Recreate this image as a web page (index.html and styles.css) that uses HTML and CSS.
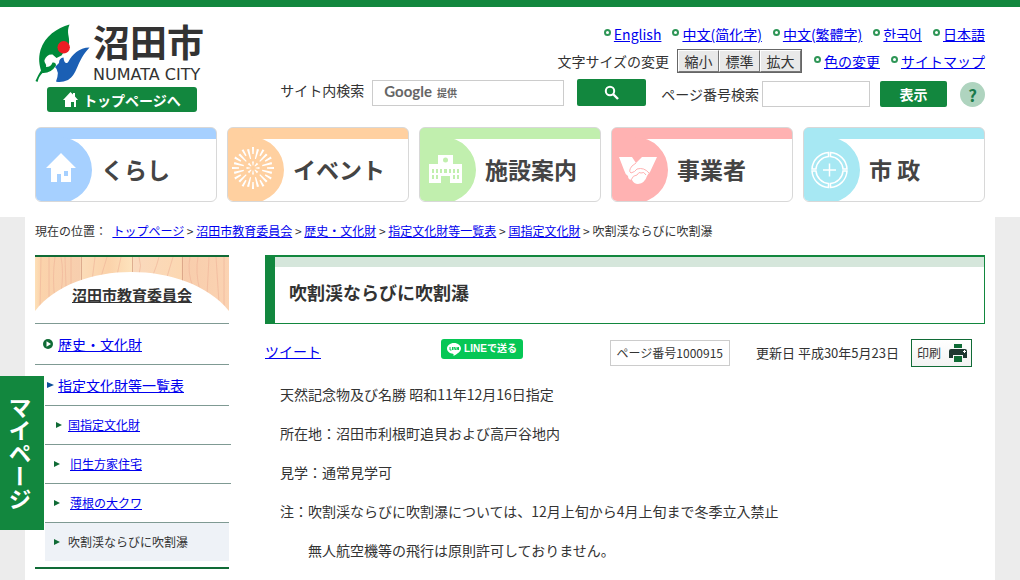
FILE: index.html
```html
<!DOCTYPE html>
<html lang="ja">
<head>
<meta charset="utf-8">
<title>吹割渓ならびに吹割瀑|沼田市</title>
<meta name="viewport" content="width=device-width, initial-scale=1">
<link rel="stylesheet" href="styles.css">
</head>
<body>
<header class="site-header">
  <div class="header-top">
    <div class="brand">
      <a class="logo" href="#">
        <svg class="logo-mark" viewBox="0 0 55 60" aria-hidden="true">
          <path fill="#00893a" d="M34.500 .5C22 4 10 12 5.500 26C3 35 4.500 41 6 46.500Q3 51 .5 57L2.500 58Q4 52 7.500 49Q16 49.500 21 41.500Q21 38 17.500 38.500Q16 43 11 43C12 40 9 39 9.500 36C11 32 14 30 17.500 30.500L21.500 34L26.500 31.500L34 20C35 12 31 9 34.500 .5Z"/>
          <circle cx="28.700" cy="23.300" r="6.200" fill="#ed1c24"/>
          <path fill="#1b5fb4" d="M54.500 23.500C44 23.500 37 31 33.500 37.500C32 40 29 40 28.500 33.500Q24 34 24 39L20 43Q25 47 21 57.500Q26 59 33 56C43 50 41 38 54.500 23.500Z"/>
        </svg>
        <span class="logo-text"><span class="logo-name">沼田市</span><span class="logo-roman">NUMATA CITY</span></span>
      </a>
      <a class="home-button" href="#">
        <svg width="15" height="15" viewBox="0 0 15 15" aria-hidden="true"><path fill="#fff" d="M7.500 0L10 2.500V1H12V4.500L15 8H13V15H11V10H8V15H2V8H0Z"/></svg>
        トップページへ
      </a>
    </div>
    <div class="tools">
      <ul class="link-row">
        <li><a href="#">English</a></li>
        <li><a href="#">中文(简化字)</a></li>
        <li><a href="#">中文(繁體字)</a></li>
        <li><a href="#" lang="ko">한국어</a></li>
        <li><a href="#">日本語</a></li>
      </ul>
      <div class="size-row">
        <span>文字サイズの変更</span>
        <div class="size-buttons"><button type="button">縮小</button><button type="button">標準</button><button type="button">拡大</button></div>
        <ul class="link-row">
          <li><a href="#">色の変更</a></li>
          <li><a href="#">サイトマップ</a></li>
        </ul>
      </div>
      <div class="search-row">
        <form class="site-search">
          <label for="q">サイト内検索</label>
          <span class="search-field"><input id="q" type="text"><span class="provider"><span class="provider-name">Google</span>提供</span></span>
          <button class="green-button" type="button" aria-label="検索">
            <svg width="16" height="16" viewBox="0 0 16 16" aria-hidden="true"><g fill="none" stroke="#fff"><circle cx="6" cy="6" r="4.200" stroke-width="2"/><path d="M9 9L14 14" stroke-width="2.400"/></g></svg>
          </button>
        </form>
        <form class="page-search">
          <label for="page-id">ページ番号検索</label>
          <input id="page-id" type="text">
          <button class="green-button" type="button">表示</button>
          <a class="help" href="#">?</a>
        </form>
      </div>
    </div>
  </div>
  <nav class="main-nav">
    <a class="card card-life" href="#">
      <svg viewBox="0 0 57 74" aria-hidden="true"><path class="tab" d="M0 0H23V9A33 33 0 0 1 23 75H0Z"/>
        <path fill="#fff" fill-rule="evenodd" d="M25 25L40 40H35V54H25V46H21V54H15V40H10ZM28 43V48H32V43Z"/></svg>
      <span>くらし</span>
    </a>
    <a class="card card-event" href="#">
      <svg viewBox="0 0 57 74" aria-hidden="true"><path class="tab" d="M0 0H23V9A33 33 0 0 1 23 75H0Z"/>
        <g fill="none" stroke="#fff">
          <circle cx="25" cy="40" r="17.500" stroke-width="7" pathLength="120" stroke-dasharray="2 8" stroke-dashoffset="1"/>
          <circle cx="25" cy="40" r="14.500" stroke-width="10" pathLength="120" stroke-dasharray="2.200 7.800" stroke-dashoffset="-3.900"/>
          <circle cx="25" cy="40" r="4.500" stroke-width="4" pathLength="120" stroke-dasharray="6 9" stroke-dashoffset="3"/>
        </g></svg>
      <span>イベント</span>
    </a>
    <a class="card card-place" href="#">
      <svg viewBox="0 0 57 74" aria-hidden="true"><path class="tab" d="M0 0H23V9A33 33 0 0 1 23 75H0Z"/>
        <path fill="#fff" d="M9 36H18V27H33V36H42V55H30V48H21V55H9Z"/>
        <circle class="tab" cx="25.500" cy="32" r="2.500"/>
        <path class="tab" d="M12 41h2v4h-2zM16 41h2v4h-2zM20 41h2v4h-2zM24 41h3v4h-3zM29 41h2v4h-2zM33 41h2v4h-2zM37 41h2v4h-2zM12 47h2v4h-2zM16 47h2v4h-2zM33 47h2v4h-2zM37 47h2v4h-2z"/></svg>
      <span>施設案内</span>
    </a>
    <a class="card card-business" href="#">
      <svg viewBox="0 0 57 74" aria-hidden="true"><path class="tab" d="M0 0H23V9A33 33 0 0 1 23 75H0Z"/>
        <path fill="#fff" d="M7 29H20L24 35L30 29H45L38 44Q36 46 35 48Q33 55 26 56Q22 56 20 52Q16 52 16 48Q13 46 12 42Z"/>
        <path class="line" d="M24 35L20 38Q16 43 19 45Q23 44 25 41Q32 39 37 45M19 52Q21 47 25 47Q27 43 29 45Q32 43 34 47"/></svg>
      <span>事業者</span>
    </a>
    <a class="card card-city" href="#">
      <svg viewBox="0 0 57 74" aria-hidden="true"><path class="tab" d="M0 0H23V9A33 33 0 0 1 23 75H0Z"/>
        <g fill="none" stroke="#fff" stroke-width="1.500">
          <path d="M26.500 24.500A17.500 17.500 0 0 1 43 41H39A13.500 13.500 0 0 0 26.500 28.500ZM43 43A17.500 17.500 0 0 1 26.500 59.500V55.500A13.500 13.500 0 0 0 39 43ZM24.500 59.500A17.500 17.500 0 0 1 8 43H12A13.500 13.500 0 0 0 24.500 55.500ZM8 41A17.500 17.500 0 0 1 24.500 24.500V28.500A13.500 13.500 0 0 0 12 41Z"/>
          <path d="M19 42H32M25.500 35.500V48.500"/>
        </g></svg>
      <span>市 政</span>
    </a>
  </nav>
</header>

<div class="page">
  <nav class="breadcrumb">現在の位置：&nbsp; <a href="#">トップページ</a> &gt; <a href="#">沼田市教育委員会</a> &gt; <a href="#">歴史・文化財</a> &gt; <a href="#">指定文化財等一覧表</a> &gt; <a href="#">国指定文化財</a> &gt; 吹割渓ならびに吹割瀑</nav>
  <div class="columns">
    <aside class="side">
      <h2 class="side-title">
        <svg viewBox="0 0 194 54" preserveAspectRatio="none" aria-hidden="true">
          <defs><linearGradient id="wood">
            <stop offset="0" stop-color="#fde0b8"/><stop offset=".03" stop-color="#fbd3ab"/><stop offset=".23" stop-color="#f7ceae"/>
            <stop offset=".24" stop-color="#fbdcb8"/><stop offset=".38" stop-color="#fbd2aa"/><stop offset=".5" stop-color="#fde3bd"/>
            <stop offset=".51" stop-color="#fad9bd"/><stop offset=".75" stop-color="#fcd8b2"/><stop offset=".77" stop-color="#f8cdac"/><stop offset="1" stop-color="#fbd3b2"/>
          </linearGradient></defs>
          <path fill="url(#wood)" d="M0 0H194V54H0Z"/>
          <g fill="none" stroke="#eeb297" stroke-opacity=".6">
            <path d="M6 0L5 50M14 0V44M20 0Q17 20 20 44M26 0Q29 15 26 36M30 0L31 30M36 0V28M60 0L57 24M72 0L66 20M86 0L82 18M104 0Q107 8 104 18M118 18Q122 8 124 0M132 20L138 0M155 0Q152 15 158 30M163 0Q160 15 165 34M174 0L172 38M181 0L184 46M189 0V50"/>
            <path stroke="#c98c72" d="M46.500 0V24M97.500 0V15M147.500 0V24"/>
          </g>
          <path fill="#fff" d="M0 54C40 2 152 2 194 54Z"/>
        </svg>
        <a href="#">沼田市教育委員会</a>
      </h2>
      <ul class="side-menu">
        <li class="level1">
          <svg width="10" height="10" viewBox="0 0 10 10" aria-hidden="true"><circle cx="5" cy="5" r="5" fill="#106b36"/><path fill="#fff" d="M3.500 2.300L8 5L3.500 7.700Z"/></svg>
          <a href="#">歴史・文化財</a>
        </li>
        <li class="level2"><a href="#">指定文化財等一覧表</a></li>
        <li class="level3 parent"><a href="#">国指定文化財</a></li>
        <li class="level3 sibling"><a href="#">旧生方家住宅</a></li>
        <li class="level3 sibling last"><a href="#">薄根の大クワ</a></li>
        <li class="level3 current">吹割渓ならびに吹割瀑</li>
      </ul>
    </aside>
    <main class="content">
      <h1 class="title">吹割渓ならびに吹割瀑</h1>
      <div class="meta">
        <a class="tweet" href="#">ツイート</a>
        <a class="line-button" href="#">
          <svg width="14" height="13" viewBox="0 0 14 13" aria-hidden="true"><path fill="#fff" d="M7 0C3 0 0 2.500 0 5.500C0 8.300 2.500 10.300 6 10.800Q7 11 6.500 13C10 11 14 8.500 14 5.500C14 2.500 11 0 7 0Z"/><path fill="none" stroke="#06c755" d="M3 4V7H4.500M5.500 4V7M7 7V4L9 7V4M12 4.500H10.500V6.500H12M10.500 5.500H12"/></svg>
          LINEで送る
        </a>
        <span class="page-number">ページ番号1000915</span>
        <span class="updated">更新日 平成30年5月23日</span>
        <button class="print" type="button">印刷
          <svg width="18" height="18" viewBox="0 0 18 18" aria-hidden="true"><path fill="#106b36" d="M5 0H13V4H5ZM5 12H13V18H5Z"/><path fill="#1f3731" d="M2 5H16Q18 5 18 7V14H14V11H4V14H0V7Q0 5 2 5Z"/><path stroke="#fff" d="M14 7.500H17M15.500 6V9"/></svg>
        </button>
      </div>
      <div class="article">
        <p>天然記念物及び名勝 昭和11年12月16日指定</p>
        <p>所在地：沼田市利根町追貝および高戸谷地内</p>
        <p>見学：通常見学可</p>
        <p>注：吹割渓ならびに吹割瀑については、12月上旬から4月上旬まで冬季立入禁止</p>
        <p>　　無人航空機等の飛行は原則許可しておりません。</p>
      </div>
    </main>
  </div>
</div>
<a class="my-page" href="#">マイページ</a>
</body>
</html>
```

FILE: styles.css
```css
*, *::before { box-sizing: border-box; }
body {
  margin: 0;
  background: #ececec;
  color: #333;
  font: 14px/20px "Noto Sans CJK JP", "Noto Sans CJK KR", sans-serif;
}
ul { margin: 0; padding: 0; list-style: none; }
a { color: #00e; }
button, input { font: inherit; color: inherit; margin: 0; }
svg { flex: none; display: block; }

.site-header {
  background: #fff;
  border-top: 7px solid #12873e;
  padding: 0 35px 15px;
}
.header-top { display: flex; justify-content: space-between; height: 120px; }
.brand { padding-top: 17px; flex: none; }
.logo { display: flex; gap: 3px; color: #333; text-decoration: none; }
.logo-mark { width: 55px; height: 60px; }
.logo-text { display: flex; flex-direction: column; gap: 9px; }
.logo-name { font-size: 37px; line-height: 34px; font-weight: 700; }
.logo-roman { font: 16px/16px "DejaVu Sans", sans-serif; }
.home-button {
  display: flex; align-items: center; justify-content: center; gap: 5px;
  width: 150px; height: 25px; margin: 3px 0 0 12px;
  border-radius: 3px; background: #12873e;
  color: #fff; font-weight: 700; text-decoration: none;
}

.tools { display: flex; flex-direction: column; align-items: flex-end; padding-top: 17px; }
.link-row { display: flex; gap: 11px; }
.link-row li { display: flex; gap: 3px; }
.link-row li::before {
  content: ""; width: 7px; height: 7px; margin-top: 5px;
  border: 2px solid #2f9657; border-radius: 50%;
}
.size-row { display: flex; align-items: center; gap: 8px; margin-top: 5px; }
.size-row .link-row { margin-left: 4px; }
.size-buttons { display: flex; border: 1px solid #666; }
.size-buttons button {
  padding: 0; width: 41px; height: 22px; line-height: 18px; font-size: 14px;
  border: 1px solid; border-color: #fff #777 #777 #fff; background: #e9e9e9;
}
.search-row { display: flex; gap: 15px; margin-top: 6px; }
.site-search, .page-search { display: flex; }
.site-search label { margin: 1px 8px 0 0; }
.search-field { position: relative; width: 192px; margin: 1px 13px 0 0; }
.search-row input { height: 26px; border: 1px solid #ccc; background: #fff; padding: 0 6px; }
.search-field input { width: 100%; }
.provider {
  position: absolute; left: 12px; top: 1px;
  display: flex; align-items: baseline; gap: 5px;
  color: #666; font-size: 10px; font-weight: 700; line-height: 20px; pointer-events: none;
}
.provider-name { font: 700 15px/20px Lato, sans-serif; }
.green-button {
  display: flex; align-items: center; justify-content: center;
  height: 27px; padding: 0; border: 0; border-radius: 2px;
  background: #12873e; color: #fff; font-weight: 700;
}
.site-search .green-button { width: 69px; }
.page-search { padding-top: 2px; }
.page-search label { margin: 3px 3px 0 0; }
.page-search input { width: 108px; }
.page-search .green-button { width: 67px; height: 26px; margin: 0 13px 0 10px; }
.help {
  width: 25px; height: 25px; margin-top: 1px; border-radius: 50%;
  background: #afd4bf; color: #1b7a4b; text-align: center; text-decoration: none;
  font: 700 17px/25px "Noto Sans CJK JP", sans-serif;
}

.main-nav { display: grid; grid-template-columns: repeat(5, 1fr); gap: 10px; }
.card {
  display: flex; align-items: center; gap: 8px; height: 75px;
  overflow: hidden; border: 1px solid #d8d8d8; border-radius: 6px;
  background: linear-gradient(var(--tint) 11px, #fff 11px);
  color: #444; font-size: 23px; font-weight: 700; text-decoration: none;
}
.card svg { width: 57px; height: 74px; }
.card span { padding-top: 8px; }
.card .tab { fill: var(--tint); }
.card .line { fill: none; stroke: var(--tint); stroke-width: 1; }
.card-life { --tint: #a6d0ff; }
.card-event { --tint: #ffd0a0; }
.card-place { --tint: #c1efae; }
.card-business { --tint: #ffb2b2; }
.card-city { --tint: #a7e8f3; }

.page { margin: 0 25px; padding: 4px 10px 12px; background: #fff; }
.breadcrumb { font-size: 12px; }
.columns { display: flex; gap: 36px; margin-top: 14px; }

.side { flex: none; width: 194px; }
.side-title {
  position: relative; margin: 0; height: 69px; padding-top: 28px;
  border-top: 2px solid #106b36; border-bottom: 1px solid #7f9a93;
  font-size: 15px; line-height: 20px; text-align: center;
}
.side-title svg { position: absolute; left: 0; top: 0; width: 100%; height: 54px; }
.side-title a { position: relative; color: #333; }
.side-menu { border-bottom: 2px solid #106b36; padding-bottom: 6px; }
.side-menu li { display: flex; align-items: center; border-bottom: 1px solid #7f9a93; }
.side-menu .level1 { height: 41px; padding-left: 8px; gap: 5px; }
.side-menu .level2 { height: 41px; margin-left: 10px; padding-left: 2px; gap: 4px; }
.side-menu .level3 { height: 39px; margin-left: 10px; padding-left: 9px; gap: 8px; font-size: 12px; }
.level2::before, .level3::before {
  content: ""; border: solid transparent; border-width: 3px 0 3px 6px; border-left-color: #106b36;
}
.level2::before { border-left-color: #0d4f9a; border-left-width: 7px; }
.side-menu .parent { padding-left: 11px; gap: 6px; margin-right: -2px; }
.side-menu .sibling { gap: 10px; margin-right: -2px; }
.side-menu .last { margin-right: 0; }
.side-menu .current { height: 38px; border: 0; background: #eef2f7; }

.content { flex: 1; min-width: 0; }
.title {
  margin: 0; padding: 25px 14px 21px;
  border: 1px solid #12873e; border-width: 2px 1px 1px 10px;
  background: linear-gradient(#d5e6db 10px, #fff 10px);
  font-size: 18px; line-height: 20px;
}
.meta { display: flex; align-items: flex-start; margin-top: 15px; }
.tweet { margin-top: 2px; width: 176px; }
.line-button {
  display: flex; align-items: center; justify-content: center; gap: 3px;
  width: 82px; height: 20px; margin-right: auto; border-radius: 3px;
  background: #06c755; color: #fff; text-decoration: none;
  font: 700 10px/18px "Liberation Sans", "Noto Sans CJK JP", sans-serif;
}
.page-number { margin-top: 1px; padding: 2px 6px; border: 1px solid #ccc; font-size: 12px; }
.updated { margin: 4px 12px 0 26px; font-size: 13px; }
.print {
  display: flex; align-items: center; gap: 8px; height: 28px; margin-right: 13px;
  padding: 0 4px 0 5px; border: 1px solid #106b36; background: linear-gradient(#fff, #f3f3f3);
  font-size: 12px;
}
.article { padding: 17px 15px 0; }
.article p { margin: 0 0 19px; }

.my-page {
  position: fixed; left: 0; top: 376px; width: 44px; height: 154px;
  display: flex; align-items: center; justify-content: center;
  background: #12873e; color: #fff; text-decoration: none;
  font-size: 23px; font-weight: 700; line-height: 40px; padding-right: 4px; writing-mode: vertical-rl;
}
```
